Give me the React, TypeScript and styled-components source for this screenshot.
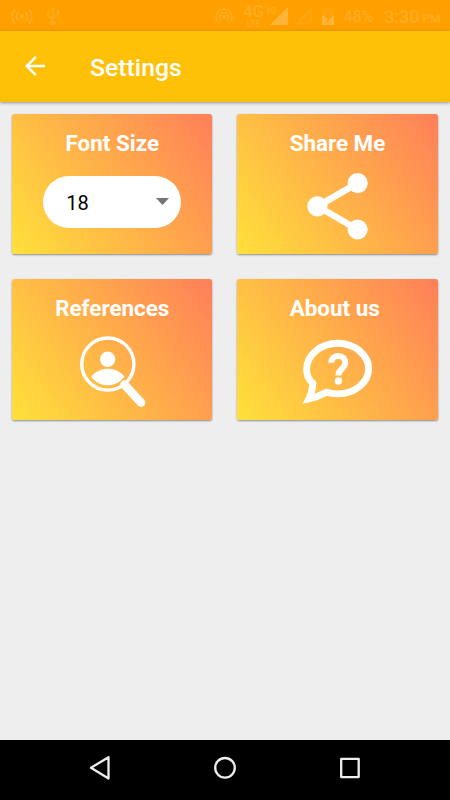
import React from "react";
import styled, { createGlobalStyle } from "styled-components";

const GlobalStyle = createGlobalStyle`
  * { box-sizing: border-box; }
  html, body { margin: 0; background: #eeeeee; }
  body { font-family: Roboto, "Noto Sans", sans-serif; overflow: hidden; }
  svg { display: block; flex: none; }
`;

const Screen = styled.div`
  width: 450px;
  height: 800px;
  display: flex;
  flex-direction: column;
  background: #eeeeee;
`;

const StatusBar = styled.header`
  height: 31px;
  flex: none;
  display: flex;
  align-items: center;
  padding: 0 10px 0 11px;
  background: #ffa000;
  color: #ffac20;
`;

const Gap = styled.span<{ $w: number }>`
  flex: none;
  width: ${(p) => p.$w}px;
`;

const Spacer = styled.span`
  flex: 1;
`;

const NetworkType = styled.span`
  display: flex;
  flex-direction: column;
  align-items: center;
  width: 22px;
  font-size: 17px;
  font-weight: 500;
  line-height: 17px;
`;

const NetworkSub = styled.span`
  font-size: 8.5px;
  line-height: 8px;
  font-weight: 500;
`;

/* The signal triangle tucks under the small label's right side. */
const SmallNetwork = styled.span`
  width: 4px;
  margin-left: 1px;
  font-size: 8.5px;
  font-weight: 500;
  line-height: 10px;
  padding-bottom: 10px;
  white-space: nowrap;
`;

const Battery = styled.span`
  width: 31px;
  font-size: 16px;
  font-weight: 500;
  white-space: nowrap;
  padding-top: 2px;
`;

const Clock = styled.span`
  width: 56px;
  font-size: 18px;
  font-weight: 500;
  white-space: nowrap;
  padding-top: 2px;
`;

const Meridiem = styled.span`
  font-size: 12px;
  margin-left: 3px;
`;

const AppBar = styled.div`
  height: 70.5px;
  flex: none;
  display: flex;
  align-items: center;
  padding-left: 20px;
  background: #ffc107;
  box-shadow: 0 1px 3px rgba(0, 0, 0, 0.38);
  z-index: 1;
`;

const BackButton = styled.button`
  border: 0;
  padding: 0;
  width: 30px;
  height: 30px;
  background: transparent;
`;

const Heading = styled.h1`
  margin: 4px 0 0 40px;
  font-size: 24.8px;
  line-height: 30px;
  font-weight: 500;
  color: #fff;
`;

const CardGrid = styled.main`
  flex: 1;
  display: grid;
  grid-template-columns: 200.2px 200.2px;
  grid-auto-rows: 140.5px;
  gap: 25px;
  padding: 12.2px;
`;

const CardBox = styled.section`
  display: flex;
  flex-direction: column;
  align-items: center;
  border-radius: 2.5px;
  padding-top: 14.9px;
  color: #fff;
  background: linear-gradient(54.9deg, #ffe13a 0%, #ff7f59 100%);
  box-shadow: 0 1px 2px rgba(0, 0, 0, 0.42);
`;

const CardTitle = styled.h2`
  margin: 0;
  font-size: 22.4px;
  line-height: 29px;
  font-weight: 700;
  white-space: pre;
`;

const Select = styled.div`
  width: 137.6px;
  height: 52px;
  margin-top: 18.2px;
  border-radius: 27px;
  padding: 2px 12.5px 0 22.8px;
  display: flex;
  align-items: center;
  justify-content: space-between;
  background: #fff;
  color: #000;
  font-size: 20px;
`;

const SelectArrow = styled.svg`
  margin-top: -2px;
`;

const CardArt = styled.svg`
  width: 199px;
  height: 96px;
  margin-left: 1px;
  margin-top: 1px;
`;

const NavBar = styled.nav`
  height: 60px;
  flex: none;
  display: flex;
  align-items: center;
  justify-content: space-between;
  padding: 0 85px 5px;
  background: #000;
`;

function Card({ title, children }: { title: string; children: React.ReactNode }) {
  return (
    <CardBox>
      <CardTitle>{title}</CardTitle>
      {children}
    </CardBox>
  );
}

const CastIcon = () => (
  <svg width="22" height="18" viewBox="0 0 22 18" fill="none" stroke="currentColor" strokeWidth="1.8">
    <circle cx="11" cy="9.5" r="2.2" fill="currentColor" stroke="none" />
    <path d="M7.5 5.5a5.4 5.4 0 0 0 0 8M14.5 5.5a5.4 5.4 0 0 1 0 8M4.3 2.3a10 10 0 0 0 0 14.4M17.7 2.3a10 10 0 0 1 0 14.4" />
  </svg>
);

const UsbIcon = () => (
  <svg width="14" height="20" viewBox="0 0 14 20" fill="none" stroke="currentColor" strokeWidth="1.4">
    <path d="M7 17V3M7 14C7 11 2 12.5 2 9V7M7 12.5c0-2.5 5-1 5-4.5V6" />
    <path d="M7 1 4.8 4.2h4.4z" fill="currentColor" stroke="none" />
    <circle cx="7" cy="17" r="2.3" fill="currentColor" stroke="none" />
    <circle cx="2" cy="6.8" r="1.6" fill="currentColor" stroke="none" />
    <path d="M10.6 4.2h3v3h-3z" fill="currentColor" stroke="none" />
  </svg>
);

const HotspotIcon = () => (
  <svg width="18" height="18" viewBox="0 0 18 18" fill="none" stroke="currentColor" strokeWidth="1.7">
    <circle cx="9" cy="10" r="2" fill="currentColor" stroke="none" />
    <path d="M4.7 16.4a7.8 7.8 0 1 1 8.6 0M6.4 13.4a4.4 4.4 0 1 1 5.2 0" />
  </svg>
);

const SignalFull = () => (
  <svg width="18" height="18" viewBox="0 0 18 18">
    <path d="M18 0v18H0z" fill="#ffb337" />
  </svg>
);

const SignalEmpty = () => (
  <svg width="17" height="18" viewBox="0 0 17 18" opacity=".5">
    <path d="M15.7 3v13.5H2.5z" fill="none" stroke="currentColor" strokeWidth="1.8" />
  </svg>
);

const BatteryIcon = () => (
  <svg width="12" height="18" viewBox="0 0 12 18">
    <path d="M0 2h3.5V0h5v2H12v7H0z" fill="currentColor" opacity=".35" />
    <path d="M0 9h12v9H0z" fill="#ffb337" />
    <path d="M7.8 4 2.5 10.5H6L4.5 16 10 9H6.8z" fill="#ffa000" />
  </svg>
);

export default function App() {
  return (
    <>
      <GlobalStyle />
      <Screen>
        <StatusBar>
          <CastIcon />
          <Gap $w={13} />
          <UsbIcon />
          <Spacer />
          <HotspotIcon />
          <Gap $w={10} />
          <NetworkType>
            4G<NetworkSub>LTE</NetworkSub>
          </NetworkType>
          <SmallNetwork>4G</SmallNetwork>
          <SignalFull />
          <Gap $w={7} />
          <SignalEmpty />
          <Gap $w={10} />
          <BatteryIcon />
          <Gap $w={10} />
          <Battery>48%</Battery>
          <Gap $w={9.5} />
          <Clock>
            3:30<Meridiem>PM</Meridiem>
          </Clock>
        </StatusBar>
        <AppBar>
          <BackButton aria-label="Back">
            <svg width="30" height="30" viewBox="0 0 24 24" fill="#fff">
              <path d="M20 11H7.83l5.59-5.59L12 4l-8 8 8 8 1.41-1.41L7.83 13H20z" />
            </svg>
          </BackButton>
          <Heading>Settings</Heading>
        </AppBar>
        <CardGrid>
          <Card title="Font Size">
            <Select role="combobox" aria-label="Font Size" aria-expanded={false}>
              18
              <SelectArrow width="13" height="7" viewBox="0 0 13 7">
                <path d="M0 0h13L6.5 7z" fill="#757575" />
              </SelectArrow>
            </Select>
          </Card>
          <Card title="Share Me">
            <CardArt viewBox="0 0 200 96" fill="#fff">
              <path d="M120.2 24 80 47.3 120.2 70.6" fill="none" stroke="#fff" strokeWidth="6.6" />
              <circle cx="120.2" cy="24" r="10.2" />
              <circle cx="79.8" cy="47.3" r="10.2" />
              <circle cx="120.2" cy="70.6" r="10.1" />
            </CardArt>
          </Card>
          <Card title="References">
            <CardArt viewBox="0 0 200 96" fill="#fff">
              <circle cx="95.3" cy="40" r="26.2" fill="none" stroke="#fff" strokeWidth="3.4" />
              <circle cx="95.1" cy="35.2" r="7.7" />
              <path d="M78.5 52.7C83 47.3 89 44.8 95.2 44.8s12.4 2.5 16.8 7.9c-4.6 5.7-10.4 8.6-16.8 8.6s-12.2-2.9-16.7-8.6z" />
              <path d="M112 60.6 128.7 78.8" fill="none" stroke="#fff" strokeWidth="8.6" strokeLinecap="round" />
            </CardArt>
          </Card>
          <Card title="About us ">
            <CardArt viewBox="0 0 200 96" fill="none" stroke="#fff">
              <path
                d="M75.2 59.5C71.5 56 68.9 51 68.9 45.2C68.9 31.3 82.8 19.1 100.2 19.1S131.3 31.3 131.3 44.8S117.4 70 100.2 70C96.1 70 92.2 69.6 88.7 68.4C83.5 71.3 78 73.7 71.3 75C74 69.8 75 64.7 75.2 59.5z"
                strokeWidth="7"
              />
              <path
                d="M93.8 38.8C93.8 34.6 96.4 32 100.8 32C105.2 32 107.8 34.6 107.8 38.5C107.8 45 100.9 44.5 100.9 51.6"
                strokeWidth="6"
              />
              <circle cx="100.9" cy="57.1" r="3.7" fill="#fff" stroke="none" />
            </CardArt>
          </Card>
        </CardGrid>
        <NavBar>
          <svg width="30" height="30" viewBox="0 0 30 30" fill="none" stroke="#eee" strokeWidth="2.3" strokeLinejoin="round">
            <path d="M23.5 4.2v21.3L6 14.8z" />
          </svg>
          <svg width="30" height="30" viewBox="0 0 30 30" fill="none" stroke="#eee" strokeWidth="2.3">
            <circle cx="15" cy="14.8" r="9.8" />
          </svg>
          <svg width="30" height="30" viewBox="0 0 30 30" fill="none" stroke="#eee" strokeWidth="2.3" strokeLinejoin="round">
            <path d="M6.2 5.9h17.5v18.2H6.2z" />
          </svg>
        </NavBar>
      </Screen>
    </>
  );
}
